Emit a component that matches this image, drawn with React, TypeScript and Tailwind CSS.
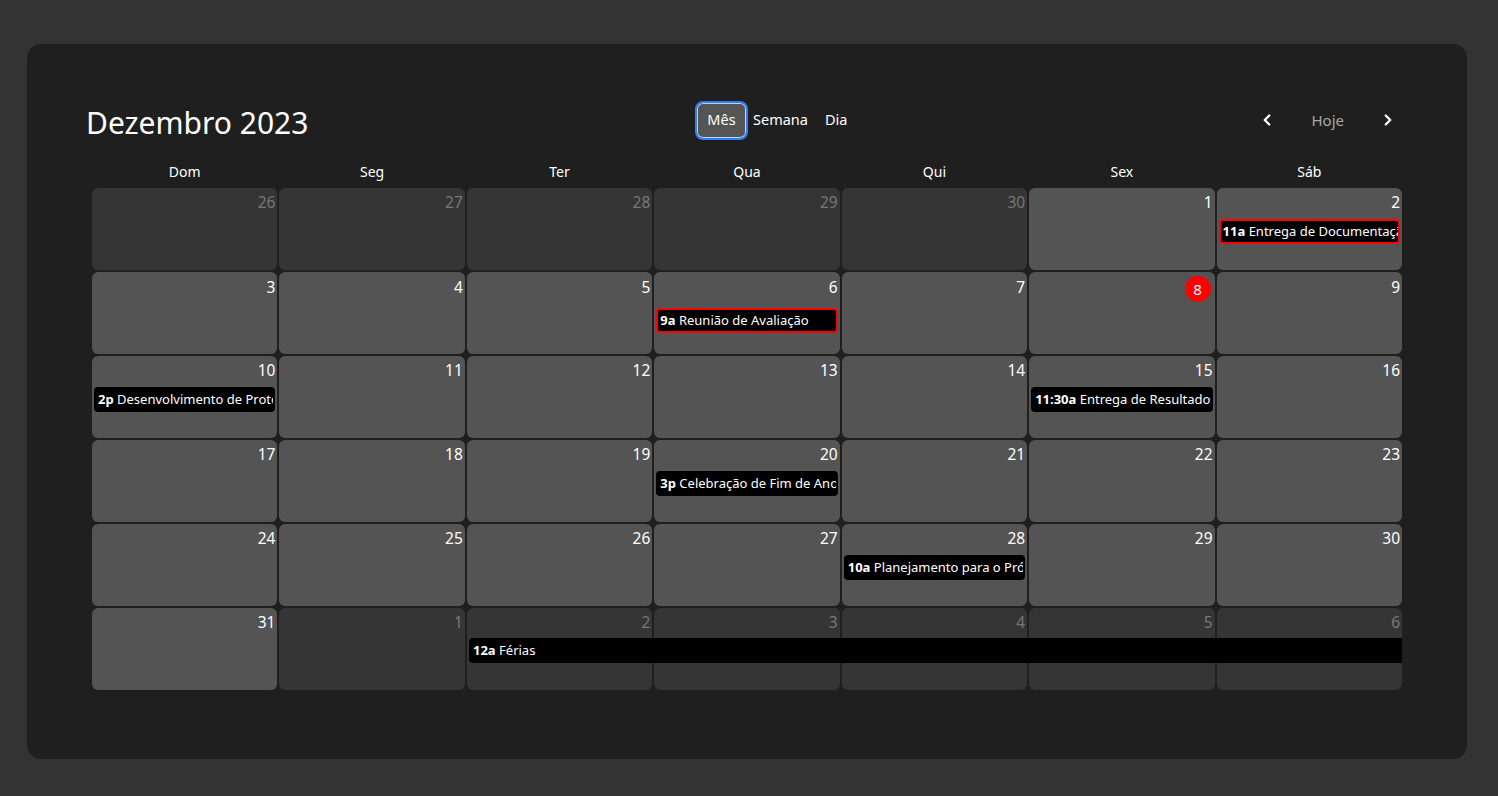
import React from "react";
import { ChevronLeft, ChevronRight } from "lucide-react";

type Ev = { time: string; title: string; red?: boolean; span?: boolean };
type Cell = { d: number; other?: boolean; today?: boolean; ev?: Ev };

const weeks: Cell[][] = [
  [
    { d: 26, other: true },
    { d: 27, other: true },
    { d: 28, other: true },
    { d: 29, other: true },
    { d: 30, other: true },
    { d: 1 },
    { d: 2, ev: { time: "11a", title: "Entrega de Documentação", red: true } },
  ],
  [
    { d: 3 },
    { d: 4 },
    { d: 5 },
    { d: 6, ev: { time: "9a", title: "Reunião de Avaliação", red: true } },
    { d: 7 },
    { d: 8, today: true },
    { d: 9 },
  ],
  [
    { d: 10, ev: { time: "2p", title: "Desenvolvimento de Protótipo" } },
    { d: 11 },
    { d: 12 },
    { d: 13 },
    { d: 14 },
    { d: 15, ev: { time: "11:30a", title: "Entrega de Resultados" } },
    { d: 16 },
  ],
  [
    { d: 17 },
    { d: 18 },
    { d: 19 },
    { d: 20, ev: { time: "3p", title: "Celebração de Fim de Ano" } },
    { d: 21 },
    { d: 22 },
    { d: 23 },
  ],
  [
    { d: 24 },
    { d: 25 },
    { d: 26 },
    { d: 27 },
    { d: 28, ev: { time: "10a", title: "Planejamento para o Próximo Ano" } },
    { d: 29 },
    { d: 30 },
  ],
  [
    { d: 31 },
    { d: 1, other: true },
    { d: 2, other: true },
    { d: 3, other: true },
    { d: 4, other: true },
    { d: 5, other: true },
    { d: 6, other: true },
  ],
];

const days = ["Dom", "Seg", "Ter", "Qua", "Qui", "Sex", "Sáb"];

function EventChip({ ev }: { ev: Ev }) {
  return (
    <div
      className={
        "mx-[2px] h-[25px] overflow-hidden whitespace-nowrap rounded-[4px] border-2 bg-black pl-[2px] text-[13px] leading-[21px] text-white " +
        (ev.red ? "border-[#ff0000]" : "border-black")
      }
    >
      <span className="font-bold">{ev.time}</span> {ev.title}
    </div>
  );
}

export default function App() {
  return (
    <div
      className="min-h-[796px] w-full bg-[#333333] pt-[44px] pl-[27px]"
      style={{ fontFamily: '"Noto Sans", "Open Sans", sans-serif' }}
    >
      <div className="h-[715px] w-[1440px] rounded-[14px] bg-[#1f1f1f] pt-[56px]">
        {/* Header */}
        <div className="flex h-[40px] items-center pl-[59px] pr-[70px]">
          <div className="w-[609px] pt-[6px] text-[30px] leading-none text-white">Dezembro 2023</div>
          <div className="flex items-center text-[14.5px] text-white">
            <div className="flex h-[39px] w-[53px] items-center justify-center rounded-[8px] border-2 border-[#2f7ff0] bg-[#555555] shadow-[inset_0_0_0_1px_#bcd4f7]">
              Mês
            </div>
            <div className="ml-[5px]">Semana</div>
            <div className="ml-[17px]">Dia</div>
          </div>
          <div className="flex-1" />
          <div className="flex items-center">
            <ChevronLeft size={18} strokeWidth={3.2} className="text-white" />
            <div className="ml-[35px] text-[15px] text-[#a8a8a8]">Hoje</div>
            <ChevronRight size={18} strokeWidth={3.2} className="ml-[35px] text-white" />
          </div>
        </div>

        {/* Weekday headers */}
        <div className="mt-[20px] grid grid-cols-7 gap-x-[2px] px-[65px]">
          {days.map((d) => (
            <div key={d} className="h-[28px] text-center text-[14px] leading-[24px] text-white">
              {d}
            </div>
          ))}
        </div>

        {/* Grid */}
        <div className="flex flex-col gap-[2px] px-[65px]">
          {weeks.map((w, wi) => {
            const hasToday = w.some((c) => c.today);
            return (
              <div key={wi} className="relative grid h-[82px] grid-cols-7 gap-[2px]">
                {w.map((c, ci) => (
                  <div
                    key={ci}
                    className={
                      "flex flex-col rounded-[6px] " + (c.other ? "bg-[#353535]" : "bg-[#545454]")
                    }
                  >
                    <div
                      className={
                        "flex justify-end pr-[2px] " + (hasToday ? "h-[36px] pt-[4px]" : "h-[31px] pt-[3px]")
                      }
                    >
                      {c.today ? (
                        <div className="mr-[2px] flex h-[26px] w-[26px] items-center justify-center rounded-full bg-[#ff0000] text-[15px] text-white">
                          {c.d}
                        </div>
                      ) : (
                        <div
                          className={
                            "text-[15.5px] leading-[22px] " + (c.other ? "text-[#777777]" : "text-white")
                          }
                        >
                          {c.d}
                        </div>
                      )}
                    </div>
                    {c.ev && <EventChip ev={c.ev} />}
                  </div>
                ))}
                {wi === 5 && (
                  <div className="pointer-events-none absolute top-[30px] right-0 left-[377px] h-[25px] overflow-hidden whitespace-nowrap rounded-l-[4px] bg-black pl-[4px] text-[13px] leading-[25px] text-white">
                    <span className="font-bold">12a</span> Férias
                  </div>
                )}
              </div>
            );
          })}
        </div>
      </div>
    </div>
  );
}
